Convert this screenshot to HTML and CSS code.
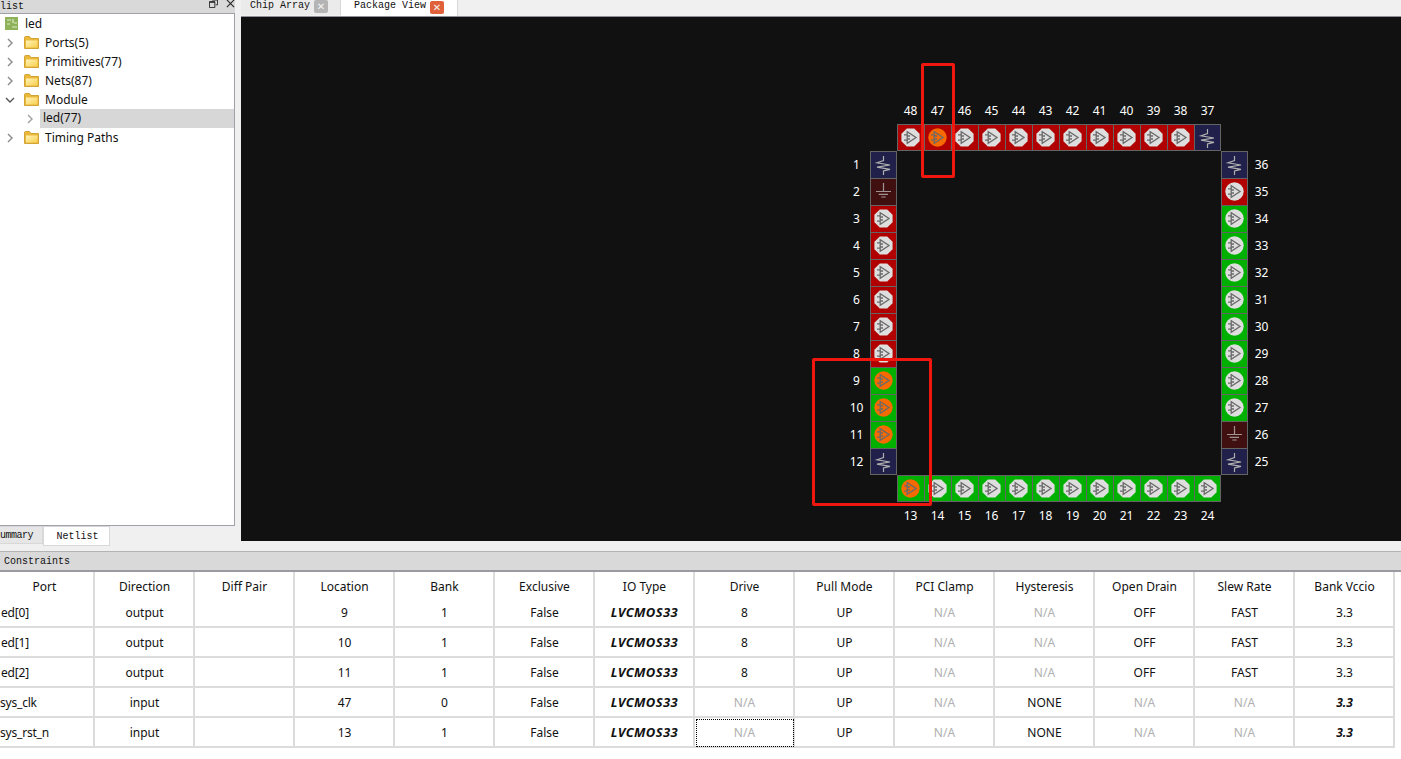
FILE: index.html
```html
<!DOCTYPE html>
<html lang="en">
<head>
<meta charset="utf-8">
<title>Package View</title>
<link rel="stylesheet" href="styles.css">
</head>
<body>
<svg class="defs" width="0" height="0" aria-hidden="true">
  <defs>
    <linearGradient id="folder-fill" x1="0" y1="0" x2="1" y2="1">
      <stop offset="0" stop-color="#fff3b8"/>
      <stop offset="1" stop-color="#f8cf4e"/>
    </linearGradient>
  </defs>
  <symbol id="folder" viewBox="0 0 15 13">
    <path d="M.5 12.5V1.5Q.5 .5 1.5 .5H5.5L7 2.5H14.5V12.5Z" fill="#eab93a" stroke="#d2a437"/>
    <path d="M2 4.5H13.5V11.5H2Z" fill="url(#folder-fill)"/>
  </symbol>
  <symbol id="amp" viewBox="0 0 19 19">
    <g fill="none" stroke="#6a6a6a" stroke-width="1.3">
      <path d="M6.2 3.8V15.2L15 9.5Z"/>
      <path d="M3 6.8H6.2M3 12.2H6.2M6.2 8H9M6.2 11H9"/>
    </g>
  </symbol>
  <symbol id="io-oct" viewBox="0 0 19 19">
    <path d="M5.8 .4H13.2L18.6 5.8V13.2L13.2 18.6H5.8L.4 13.2V5.8Z" fill="#dedede"/>
    <use href="#amp" width="19" height="19"/>
  </symbol>
  <symbol id="io-circle" viewBox="0 0 19 19">
    <circle cx="9.5" cy="9.5" r="9.2" fill="#dedede"/>
    <use href="#amp" width="19" height="19"/>
  </symbol>
  <symbol id="io-used" viewBox="0 0 19 19">
    <circle cx="9.5" cy="9.5" r="9.2" fill="#f76a00"/>
    <use href="#amp" width="19" height="19"/>
  </symbol>
  <symbol id="vcc" viewBox="1 1 25 25">
    <path d="M13.5 5V9.5L7 11.8L20 14L7 16.2L20 18.4L13.5 20V24" fill="none" stroke="#b0b0b0" stroke-width="1.2"/>
  </symbol>
  <symbol id="gnd" viewBox="1 1 25 25">
    <path d="M13.5 5V13.5M6 13.5H21M8.7 16.3H18M11.3 19H15.7" fill="none" stroke="#a09494" stroke-width="1.2"/>
  </symbol>
  <symbol id="chev-r" viewBox="0 0 8 10">
    <path d="M2 1L6 5L2 9" fill="none" stroke="currentColor" stroke-width="1.4"/>
  </symbol>
  <symbol id="chev-d" viewBox="0 0 10 8">
    <path d="M1 2L5 6L9 2" fill="none" stroke="currentColor" stroke-width="1.4"/>
  </symbol>
</svg>

<div class="app">
  <div class="upper">
    <aside class="left">
      <div class="dock-title">
        <span class="mono">list</span>
        <span class="dock-btns">
          <svg class="dock-icon" viewBox="0 0 10 10"><path d="M3.5 .5H9.5V6.5H7.5M.5 3H6.5V9.5H.5Z" fill="none" stroke="#222"/><path d="M.5 3.5H6.5M3.5 1H9.5" stroke="#222" stroke-width="1.4"/></svg>
          <svg class="dock-icon" viewBox="0 0 10 10"><path d="M1 1L9 9M9 1L1 9" stroke="#222" stroke-width="1.2"/></svg>
        </span>
      </div>
      <div class="tree">
        <div class="node root">
          <svg class="chip" viewBox="0 0 13 13"><rect width="13" height="13" fill="#8eb25a"/><path d="M2 3H6M2 7H5M8 2V6M7 10H12M9 6H12" stroke="#dfe9c8" stroke-width="1.2"/></svg>
          <span>led</span>
        </div>
        <div class="node"><svg class="arrow"><use href="#chev-r"/></svg><svg class="folder"><use href="#folder"/></svg><span>Ports(5)</span></div>
        <div class="node"><svg class="arrow"><use href="#chev-r"/></svg><svg class="folder"><use href="#folder"/></svg><span>Primitives(77)</span></div>
        <div class="node"><svg class="arrow"><use href="#chev-r"/></svg><svg class="folder"><use href="#folder"/></svg><span>Nets(87)</span></div>
        <div class="node"><svg class="arrow open"><use href="#chev-d"/></svg><svg class="folder"><use href="#folder"/></svg><span>Module</span></div>
        <div class="node sub"><svg class="arrow"><use href="#chev-r"/></svg><span class="selected">led(77)</span></div>
        <div class="node"><svg class="arrow"><use href="#chev-r"/></svg><svg class="folder"><use href="#folder"/></svg><span>Timing Paths</span></div>
      </div>
      <div class="left-tabs">
        <span class="ltab mono">ummary</span>
        <span class="ltab ltab-on mono">Netlist</span>
      </div>
    </aside>

    <main class="right">
      <div class="tabs">
        <span class="tab mono">Chip Array<span class="tab-x grey">✕</span></span>
        <span class="tab tab-on mono">Package View<span class="tab-x red">✕</span></span>
      </div>
      <div class="canvas">
        <div class="package">
          <div class="hrow labels">
            <span>48</span><span>47</span><span>46</span><span>45</span><span>44</span><span>43</span><span>42</span><span>41</span><span>40</span><span>39</span><span>38</span><span>37</span>
          </div>
          <div class="hrow pins">
            <span class="pin red"><svg><use href="#io-oct"/></svg></span>
            <span class="pin red"><svg><use href="#io-used"/></svg></span>
            <span class="pin red"><svg><use href="#io-oct"/></svg></span>
            <span class="pin red"><svg><use href="#io-oct"/></svg></span>
            <span class="pin red"><svg><use href="#io-oct"/></svg></span>
            <span class="pin red"><svg><use href="#io-oct"/></svg></span>
            <span class="pin red"><svg><use href="#io-oct"/></svg></span>
            <span class="pin red"><svg><use href="#io-oct"/></svg></span>
            <span class="pin red"><svg><use href="#io-oct"/></svg></span>
            <span class="pin red"><svg><use href="#io-oct"/></svg></span>
            <span class="pin red"><svg><use href="#io-oct"/></svg></span>
            <span class="pin navy"><svg class="full"><use href="#vcc"/></svg></span>
          </div>
          <div class="middle">
            <div class="vcol labels">
              <span>1</span><span>2</span><span>3</span><span>4</span><span>5</span><span>6</span><span>7</span><span>8</span><span>9</span><span>10</span><span>11</span><span>12</span>
            </div>
            <div class="vcol">
              <span class="pin navy"><svg class="full"><use href="#vcc"/></svg></span>
              <span class="pin maroon"><svg class="full"><use href="#gnd"/></svg></span>
              <span class="pin red"><svg><use href="#io-oct"/></svg></span>
              <span class="pin red"><svg><use href="#io-oct"/></svg></span>
              <span class="pin red"><svg><use href="#io-oct"/></svg></span>
              <span class="pin red"><svg><use href="#io-oct"/></svg></span>
              <span class="pin red"><svg><use href="#io-oct"/></svg></span>
              <span class="pin red"><svg><use href="#io-oct"/></svg></span>
              <span class="pin green"><svg><use href="#io-used"/></svg></span>
              <span class="pin green"><svg><use href="#io-used"/></svg></span>
              <span class="pin green"><svg><use href="#io-used"/></svg></span>
              <span class="pin navy"><svg class="full"><use href="#vcc"/></svg></span>
            </div>
            <div class="void"></div>
            <div class="vcol">
              <span class="pin navy"><svg class="full"><use href="#vcc"/></svg></span>
              <span class="pin red"><svg><use href="#io-circle"/></svg></span>
              <span class="pin green"><svg><use href="#io-circle"/></svg></span>
              <span class="pin green"><svg><use href="#io-circle"/></svg></span>
              <span class="pin green"><svg><use href="#io-circle"/></svg></span>
              <span class="pin green"><svg><use href="#io-circle"/></svg></span>
              <span class="pin green"><svg><use href="#io-circle"/></svg></span>
              <span class="pin green"><svg><use href="#io-circle"/></svg></span>
              <span class="pin green"><svg><use href="#io-circle"/></svg></span>
              <span class="pin green"><svg><use href="#io-circle"/></svg></span>
              <span class="pin maroon"><svg class="full"><use href="#gnd"/></svg></span>
              <span class="pin navy"><svg class="full"><use href="#vcc"/></svg></span>
            </div>
            <div class="vcol labels">
              <span>36</span><span>35</span><span>34</span><span>33</span><span>32</span><span>31</span><span>30</span><span>29</span><span>28</span><span>27</span><span>26</span><span>25</span>
            </div>
          </div>
          <div class="hrow pins">
            <span class="pin green"><svg><use href="#io-used"/></svg></span>
            <span class="pin green"><svg><use href="#io-oct"/></svg></span>
            <span class="pin green"><svg><use href="#io-oct"/></svg></span>
            <span class="pin green"><svg><use href="#io-oct"/></svg></span>
            <span class="pin green"><svg><use href="#io-oct"/></svg></span>
            <span class="pin green"><svg><use href="#io-oct"/></svg></span>
            <span class="pin green"><svg><use href="#io-oct"/></svg></span>
            <span class="pin green"><svg><use href="#io-oct"/></svg></span>
            <span class="pin green"><svg><use href="#io-oct"/></svg></span>
            <span class="pin green"><svg><use href="#io-oct"/></svg></span>
            <span class="pin green"><svg><use href="#io-oct"/></svg></span>
            <span class="pin green"><svg><use href="#io-oct"/></svg></span>
          </div>
          <div class="hrow labels">
            <span>13</span><span>14</span><span>15</span><span>16</span><span>17</span><span>18</span><span>19</span><span>20</span><span>21</span><span>22</span><span>23</span><span>24</span>
          </div>
        </div>
        <div class="mark mark-a"></div>
        <div class="mark mark-b"></div>
      </div>
    </main>
  </div>

  <div class="constraints-bar mono">Constraints</div>

  <table class="grid">
    <thead>
      <tr><th>Port</th><th>Direction</th><th>Diff Pair</th><th>Location</th><th>Bank</th><th>Exclusive</th><th>IO Type</th><th>Drive</th><th>Pull Mode</th><th>PCI Clamp</th><th>Hysteresis</th><th>Open Drain</th><th>Slew Rate</th><th>Bank Vccio</th></tr>
    </thead>
    <tbody>
      <tr><td class="port led">ed[0]</td><td>output</td><td></td><td>9</td><td>1</td><td>False</td><td class="em">LVCMOS33</td><td>8</td><td>UP</td><td class="na">N/A</td><td class="na">N/A</td><td>OFF</td><td>FAST</td><td>3.3</td></tr>
      <tr><td class="port led">ed[1]</td><td>output</td><td></td><td>10</td><td>1</td><td>False</td><td class="em">LVCMOS33</td><td>8</td><td>UP</td><td class="na">N/A</td><td class="na">N/A</td><td>OFF</td><td>FAST</td><td>3.3</td></tr>
      <tr><td class="port led">ed[2]</td><td>output</td><td></td><td>11</td><td>1</td><td>False</td><td class="em">LVCMOS33</td><td>8</td><td>UP</td><td class="na">N/A</td><td class="na">N/A</td><td>OFF</td><td>FAST</td><td>3.3</td></tr>
      <tr><td class="port">sys_clk</td><td>input</td><td></td><td>47</td><td>0</td><td>False</td><td class="em">LVCMOS33</td><td class="na">N/A</td><td>UP</td><td class="na">N/A</td><td>NONE</td><td class="na">N/A</td><td class="na">N/A</td><td class="em plain">3.3</td></tr>
      <tr><td class="port">sys_rst_n</td><td>input</td><td></td><td>13</td><td>1</td><td>False</td><td class="em">LVCMOS33</td><td class="na focus">N/A</td><td>UP</td><td class="na">N/A</td><td>NONE</td><td class="na">N/A</td><td class="na">N/A</td><td class="em plain">3.3</td></tr>
    </tbody>
  </table>
</div>
</body>
</html>
```
FILE: styles.css
```css
* { box-sizing: border-box; }
html, body { margin: 0; height: 100%; overflow: hidden; }
body { background: #fff; font-family: "Noto Sans", "Liberation Sans", sans-serif; font-size: 12px; color: #111; }
.defs { position: absolute; }
.mono { font-family: "Liberation Mono", monospace; font-size: 10px; }
.app { width: 1401px; height: 759px; display: flex; flex-direction: column; overflow: hidden; }

.upper { height: 552px; display: flex; background: #f0f0f0; border-bottom: 1px solid #b4b4b4; }
.left { width: 235px; display: flex; flex-direction: column; flex: none; }
.dock-title { height: 13px; background: #d9d9d9; display: flex; justify-content: space-between; align-items: center; overflow: hidden; }
.dock-btns { display: flex; gap: 8px; margin-top: -6px; }
.dock-icon { width: 9px; height: 9px; display: block; }
.tree { height: 513px; background: #fff; border: 1px solid #a0a0a8; border-left: 0; }
.node { height: 19px; display: flex; align-items: center; padding-left: 6px; white-space: nowrap; color: #8a8a8a; }
.node span { color: #111; }
.root { padding-left: 5px; gap: 7px; }
.chip { width: 13px; height: 13px; }
.arrow { width: 8px; height: 10px; margin-right: 10px; flex: none; }
.arrow.open { width: 10px; height: 8px; margin-left: -1px; margin-right: 9px; color: #555; }
.arrow + .folder { margin-right: 6px; }
.folder { width: 15px; height: 13px; flex: none; }
.sub { padding-left: 26px; color: #a0a0a0; }
.sub .arrow { margin-right: 6px; }
.selected { background: #d7d7d7; flex: 1; height: 19px; line-height: 18px; padding-left: 3px; }
.left-tabs { display: flex; height: 25px; align-items: flex-start; }
.ltab { width: 43px; height: 18px; background: #e6e6e6; border: 1px solid #d8d8d8; border-left: 0; display: flex; justify-content: flex-end; padding-right: 9px; align-items: center; letter-spacing: -.5px; }
.ltab-on { width: 67px; background: #fff; height: 20px; justify-content: center; padding: 0 0 0 2px; border-left: 1px solid #d8d8d8; letter-spacing: 0; }

.right { flex: 1; display: flex; flex-direction: column; min-width: 0; margin-left: 6px; }
.tabs { height: 16px; display: flex; align-items: flex-start; }
.tab { height: 15px; width: 100px; padding: 0 0 5px 9px; display: flex; align-items: center; gap: 4px; background: #ebebeb; border-right: 1px solid #d8d8d8; white-space: pre; }
.tab-on { background: #fff; width: 117px; height: 16px; padding-left: 13px; gap: 4px; }
.tab-x { width: 14px; height: 13px; color: #f4f4f4; font-family: "DejaVu Sans", sans-serif; font-size: 10px; font-weight: 700; line-height: 13px; text-align: center; border-radius: 2px; margin-top: 3px; }
.grey { background: #b4b4b4; }
.red { background: #e0603a; }

.canvas { position: relative; height: 525px; background: #111; border-top: 1px solid #909098; }
.package { display: flex; flex-direction: column; padding: 80px 0 0 602px; }
.hrow { display: flex; padding-left: 54px; }
.middle { display: flex; }
.vcol { display: flex; flex-direction: column; }
.void { width: 324px; }
.labels { color: #fff; font-size: 12px; }
.labels span { width: 27px; height: 27px; display: flex; align-items: center; justify-content: center; }
.pin { width: 27px; height: 27px; display: flex; align-items: center; justify-content: center; border: 1px solid #646464; flex: none; }
.hrow .pin { border-right: 0; padding-right: 1px; }
.hrow .pin:last-child { border-right: 1px solid #646464; padding-right: 0; }
.vcol .pin { border-bottom: 0; padding-bottom: 1px; }
.vcol .pin:last-child { border-bottom: 1px solid #646464; padding-bottom: 0; }
.pin svg { width: 19px; height: 19px; display: block; flex: none; }
.pin svg.full { width: 25px; height: 25px; }
.pin.red { background: #b00000; }
.pin.green { background: #00b000; }
.navy { background: #20204a; }
.maroon { background: #401010; }
.mark { position: absolute; border: 3px solid #f0180e; border-radius: 2px; }
.mark-a { left: 680px; top: 46px; width: 34px; height: 115px; }
.mark-b { left: 571px; top: 341px; width: 120px; height: 148px; }

.constraints-bar { height: 20px; background: #d9d9d9; border-bottom: 2px solid #9a9aa0; padding-left: 4px; line-height: 20px; flex: none; }

.grid { border-collapse: separate; border-spacing: 0; table-layout: fixed; width: 1400px; margin-left: -5px; flex: none; }
.grid th, .grid td { width: 100px; text-align: center; font-weight: 400; border-right: 2px solid #dcdcdc; padding: 0 0 0 1px; white-space: nowrap; overflow: hidden; }
.grid th { height: 26px; padding-top: 2px; font-size: 12px; }
.grid td { height: 30px; border-bottom: 2px solid #dcdcdc; }
.grid .port { text-align: left; padding-left: 5px; letter-spacing: -.2px; }
.grid .led { padding-left: 6px; }
.grid .em { font-weight: 700; font-style: italic; font-size: 13px; letter-spacing: .4px; }
.grid .plain { font-size: 12px; letter-spacing: 0; }
.grid .na { color: #b0b0b0; }
.grid .focus { outline: 1px dotted #000; outline-offset: -2px; }
```
